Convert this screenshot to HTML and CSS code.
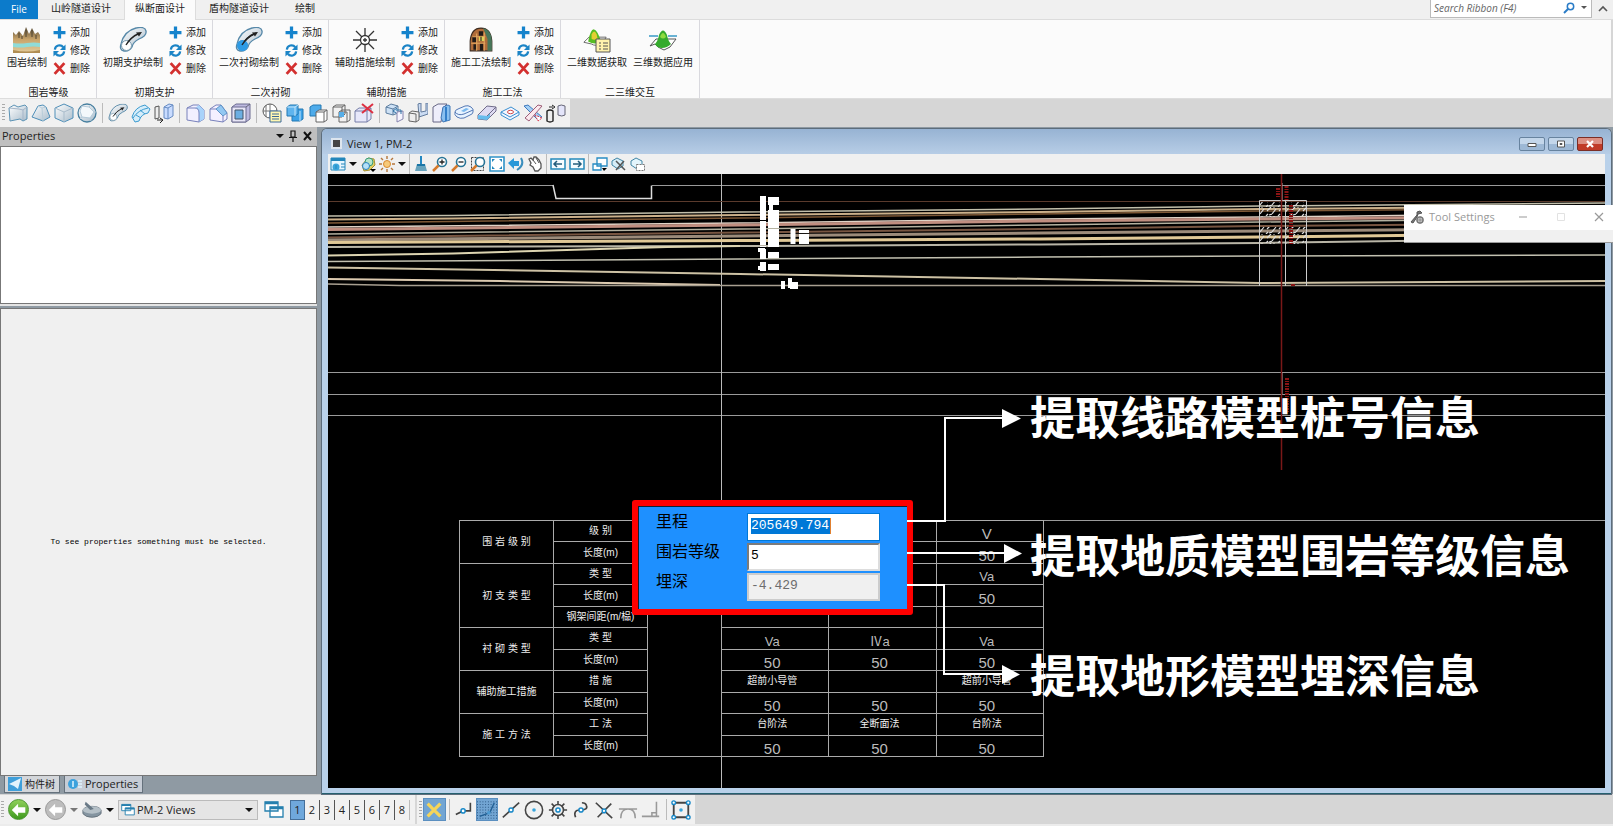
FILE: index.html
```html
<!DOCTYPE html>
<html lang="zh-CN">
<head>
<meta charset="utf-8">
<title>View 1, PM-2</title>
<link rel="stylesheet" href="styles.css">
</head>
<body>
<svg class="defs" aria-hidden="true">
  <defs>
    <linearGradient id="gSteel" x1="0" y1="0" x2="1" y2="1"><stop offset="0" stop-color="#fff"/><stop offset="1" stop-color="#a9bccb"/></linearGradient>
    <linearGradient id="gRock" x1="0" y1="0" x2="0" y2="1"><stop offset="0" stop-color="#5c4f3a"/><stop offset="0.5" stop-color="#c9a46a"/><stop offset="1" stop-color="#e0c896"/></linearGradient>
    <symbol id="plus" viewBox="0 0 12 12"><path d="M6 0.500v11M0.500 6h11" stroke="#1583cc" stroke-width="3"/></symbol>
    <symbol id="sync" viewBox="0 0 14 14"><path d="M2 6a5 5 0 0 1 9-2.500M12 8a5 5 0 0 1-9 2.500" fill="none" stroke="#1b84c6" stroke-width="2.400"/><path d="M13.500 0.500v6h-6zM.5 13.500v-6h6z" fill="#1b84c6"/></symbol>
    <symbol id="cross" viewBox="0 0 12 12"><path d="M1.500 1l9 10M10.500 1l-9 10" stroke="#d3302f" stroke-width="2.600"/></symbol>
    <symbol id="rock" viewBox="0 0 28 26"><path d="M0 25V5l3 3 3-4 4 5 3-9 3 7 3-6 3 6 3-2 2 3v17z" fill="url(#gRock)"/><path d="M6 6v5M13 3v7M19 3v7M9 9v3M23 8v4" stroke="#4d4230"/><path d="M0 16q7 1 14 0t13 0v4q-7-1-13 0t-14 0z" fill="#8fdcd8"/><path d="M0 23q14 3 27 0v3H0z" fill="#b08d52"/></symbol>
    <symbol id="tube" viewBox="0 0 28 26"><path d="M2 17Q5 4 17 1q9-2 10 3t-7 8q-6 3-7 8-3 5-8 4t-3-7z" fill="url(#gSteel)" stroke="#5688a8" stroke-width="1.300"/><circle cx="7.500" cy="18.500" r="5" fill="#fff" stroke="#7899ad"/><path d="M7 18q5-8 12-11" fill="none" stroke="#222" stroke-width="1.400"/><path d="M23 5l-6 0.500 3 4z" fill="#222"/></symbol>
    <symbol id="tubeb" viewBox="0 0 28 26"><use href="#tube"/><circle cx="7.500" cy="18.500" r="5.500" fill="#2e9be5"/><path d="M7 18q5-8 12-11" fill="none" stroke="#222" stroke-width="1.400"/></symbol>
    <symbol id="bolts" viewBox="0 0 24 24"><circle cx="12" cy="12" r="4.500" fill="#fff" stroke="#333" stroke-width="1.300"/><path d="M12 0v8M12 16v8M0 12h8M16 12h8M3 3l6 6M15 15l6 6M21 3l-6 6M9 15l-6 6M12 10v4M10 12h4" stroke="#333" stroke-width="1.300"/></symbol>
    <symbol id="tunnel" viewBox="0 0 22 24"><path d="M1 22v-9Q2 1 11 1t10 12v9z" fill="#b06c3a" stroke="#3c2b20"/><path d="M13 1q8 2 8 12v9h-4V11z" fill="#47765a"/><path d="M3 9h4v5H3zM9 4h4v4H9zM4 16h3v5H4zM10 15h3v7h-3z" fill="#221b18"/><path d="M7 6v16M14 5v17M2 15h13M3 9h12" stroke="#e3a65f"/><path d="M9 9h5v4H9z" fill="#ded25a"/><path d="M11 9v4" stroke="#222"/></symbol>
    <symbol id="hill" viewBox="0 0 28 24"><path d="M1 17l6-6h20l-5 8q-8 3-12 0z" fill="#fff" stroke="#555"/><path d="M6 16Q9 1 13 2t8 14q-7 5-15 0z" fill="#56bd23"/><path d="M10 8q3-7 6 0l1 5q-4 2-7 0z" fill="#e4cf32"/></symbol>
    <symbol id="hilltag" viewBox="0 0 28 26"><use href="#hill" width="24" height="22"/><path d="M13 12h14v13H13z" fill="#fff3ad" stroke="#555"/><path d="M16 16h2m2 0h5M16 19h2m2 0h5M16 22h2m2 0h5" stroke="#555"/></symbol>
    <symbol id="hillline" viewBox="0 0 28 24"><path d="M1 18l6-7h20l-6 8-6 3-6-3-3-3z" fill="#fff" stroke="#555"/><path d="M6 16q3-3 4-9 4-9 8 0 1 6 4 9-4 4-9 4t-7-4z" fill="#35ab2d"/><path d="M11 9q3-8 6 0-3 3-6 0z" fill="#8edb3f"/><path d="M0 8h9M19 8h9" stroke="#3a9ac6" stroke-width="1.500"/></symbol>

    <symbol id="s1" viewBox="0 0 20 20"><path d="M1 5l5-3 4 2 7-2 2 2v12l-4 2-3-2-10 2z" fill="url(#gSteel)" stroke="#5c93b5"/><path d="M1 5l10 1 4 1v10M15 7l4-3" fill="none" stroke="#a5b5c8"/></symbol>
    <symbol id="s2" viewBox="0 0 20 20"><path d="M7 3l5-1 3 2 4 10-7 4-11-4z" fill="url(#gSteel)" stroke="#4f8fb8"/><path d="M7 3l4 2 4-1M11 5l1 13" fill="none" stroke="#b9cdd9"/></symbol>
    <symbol id="s3" viewBox="0 0 20 20"><path d="M1 5l9-4 9 4v10l-9 4-9-4z" fill="url(#gSteel)" stroke="#4f8fb8"/><path d="M1 5l9 4 9-4M10 9v10" fill="none" stroke="#a9bccb"/></symbol>
    <symbol id="s4" viewBox="0 0 20 20"><circle cx="10" cy="10" r="9" fill="url(#gSteel)" stroke="#477f9f" stroke-width="1.300"/><path d="M5 3l7 1 5 5-4 6-8-1-2-6z" fill="#f3f8fb" stroke="#b4cad9"/><path d="M12 4l2-2M17 9h2M13 15l1 3M5 14l-2 2" stroke="#b4cad9"/></symbol>
    <symbol id="s5" viewBox="0 0 28 26"><use href="#tube"/></symbol>
    <symbol id="s6" viewBox="0 0 20 20"><path d="M1 14Q4 4 14 2l5 4-2 4Q10 11 8 18l-4 1z" fill="#d5edfa" stroke="#3c9bd0"/><path d="M2 15Q7 7 17 5M5 12l5 3M9 7l5 4" fill="none" stroke="#3c9bd0"/></symbol>
    <symbol id="s7" viewBox="0 0 20 20"><path d="M1 4l4-1v12l-4 1z" fill="#eee" stroke="#555"/><path d="M10 4l5-3 4 1v11l-5 3-4-1z" fill="#c9dcff" stroke="#668bc2"/><path d="M10 4l4 1 5-3M14 5v11" stroke="#668bc2" fill="none"/><path d="M3 17h5m-2-2l3 2-3 3" stroke="#222" fill="none"/></symbol>
    <symbol id="s8" viewBox="0 0 20 20"><path d="M2 5l6-3h6l5 5v9l-5 3-12-2z" fill="#f2f0ff" stroke="#7881bb"/><path d="M10 5l4-3 5 5v9l-5 3V10q0-4-4-5z" fill="#a9d3fa"/><path d="M2 5h8q4 0 4 5v9" fill="none" stroke="#7881bb"/></symbol>
    <symbol id="s9" viewBox="0 0 20 20"><path d="M2 6l6-4h5l6 8v6l-4 3-13-2z" fill="#f4f0ff" stroke="#7881bb"/><path d="M8 6l5-4 6 8-4 3z" fill="#92c8f2" stroke="#5f94c8"/><path d="M15 13v6M2 6h6" stroke="#7881bb"/></symbol>
    <symbol id="s10" viewBox="0 0 20 20"><path d="M1 4l4-3h14v15l-4 3H1z" fill="#bdb9df" stroke="#6d6d91"/><path d="M1 4h14v15H1z" fill="#e7e5f6" stroke="#6d6d91"/><path d="M4 7h8v9H4z" fill="#6caee2" stroke="#456"/><path d="M15 4l4-3" stroke="#667"/></symbol>
    <symbol id="s11" viewBox="0 0 20 20"><circle cx="8" cy="8" r="7" fill="#fff" stroke="#555"/><path d="M1 8h14M8 1v14M4 2v12" stroke="#777"/><path d="M8 8h11v11H8z" fill="#fff7b2" stroke="#3c6a98"/><path d="M10 11h7M10 13.500h7M10 16h7" stroke="#3c6a98"/></symbol>
    <symbol id="s12" viewBox="0 0 20 20"><path d="M7 8l3-2h8v10l-3 2H7z" fill="#3da2e8" stroke="#2278b3"/><path d="M2 4l3-2h8v9l-3 2H2z" fill="#5fb4ee" stroke="#2278b3"/><path d="M2 4h8v9M10 4l3-2M15 8v10" fill="none" stroke="#c5e6fb"/></symbol>
    <symbol id="s13" viewBox="0 0 20 20"><path d="M2 4l3-2h8v9l-3 2H2z" fill="#4eabea" stroke="#2278b3"/><path d="M8 9l3-2h8v10l-3 2H8zM8 9h8v10M16 9l3-2" fill="#fff" stroke="#666"/></symbol>
    <symbol id="s14" viewBox="0 0 20 20"><path d="M2 4l3-2h9v9l-3 3H2zM2 4h9v10M11 4l3-2M8 9l3-2h8v10l-3 2H8zM8 9h8v10" fill="none" stroke="#666"/><path d="M8 9h5v5H8z" fill="#56aee8"/></symbol>
    <symbol id="s15" viewBox="0 0 20 20"><path d="M1 8l4-3h12v11l-4 3H1zM1 8h12v11M13 8l4-3" fill="#e7e8fa" stroke="#777fa8"/><path d="M8 1l11 9M19 1L8 10" stroke="#dd3042" stroke-width="2"/></symbol>
    <symbol id="s16" viewBox="0 0 20 20"><path d="M1 4l5-3 7 2v7l-5 2-7-2zM1 4l7 2v6M8 6l5-3" fill="#cde1f5" stroke="#5c7d9f"/><path d="M12 9l6-1v8l-6 3z" fill="#f6f4ff" stroke="#8584ad"/><path d="M11 7h5v4M12 5l-4 3 3 2" stroke="#2d72a5" fill="none"/></symbol>
    <symbol id="s17" viewBox="0 0 20 20"><path d="M10 1l3-1v9l5-1V0h2v11l-9 3z" fill="#cbdcf3" stroke="#627b9d"/><path d="M1 10l3-2 7 1v8l-3 2-7-1zM1 10l7 1v8" fill="#eee" stroke="#666"/></symbol>
    <symbol id="s18" viewBox="0 0 20 20"><path d="M2 4l5-3h9l-4 4-2 14H2z" fill="#eeeefb" stroke="#676785"/><path d="M12 4l5-2 2 1v14l-7 2-2-4z" fill="#8ac0ef" stroke="#3f78b8"/><path d="M15 4v14" stroke="#337fca" stroke-width="2"/></symbol>
    <symbol id="s19" viewBox="0 0 20 20"><path d="M1 9q0-2 3-3l7-3q3-1 6 1t2 5q0 2-3 3l-6 3q-4 1-7-1T1 9z" fill="#e7f3ff" stroke="#5478b4"/><path d="M1 9q3 4 9 2l9-4" fill="none" stroke="#5478b4"/><path d="M7 8l5-3 3 1-5 3z" fill="#7bb9ee"/></symbol>
    <symbol id="s20" viewBox="0 0 20 20"><path d="M1 12l9-9 9 1v4l-9 9-9-1z" fill="#dedbf2" stroke="#6f6b89"/><path d="M1 12l9 1v4l-9-1zM10 13l3-3v4l-3 3z" fill="#67bced"/><path d="M10 13l9-9" stroke="#6f6b89"/></symbol>
    <symbol id="s21" viewBox="0 0 20 20"><path d="M1 9l10-5 8 5v3l-9 5-9-5z" fill="#f3f6ff" stroke="#3a8fd0"/><path d="M1 9l9 5 9-5" stroke="#3a8fd0" fill="none"/><ellipse cx="10.500" cy="9" rx="3" ry="1.700" fill="#fff" stroke="#d04a4a"/></symbol>
    <symbol id="s22" viewBox="0 0 20 20"><path d="M1 3l4-1 14 12-4 3z" fill="#a2cff5" stroke="#3e78bd"/><path d="M19 3l-4-1L2 15l4 3z" fill="#fbe9ee" stroke="#9d5d77"/><path d="M12 12l3 6 4-3z" fill="#fff" stroke="#d93a4e" stroke-dasharray="2 1"/></symbol>
    <symbol id="s23" viewBox="0 0 20 20"><path d="M1 8q3-2 6 0v10q-3 2-6 0z" fill="#eee" stroke="#222" stroke-width="1.400"/><path d="M12 3q3-2 7 0v9q-3 2-7 0z" fill="#e4e5fa" stroke="#667"/><path d="M3 4h4M6 2l3 2-3 2" stroke="#222" fill="none"/></symbol>

    <symbol id="v1" viewBox="0 0 16 16"><path d="M1 2h14v12H1z" fill="#e7f6ff" stroke="#2487bb"/><path d="M1 2h14v3H1z" fill="#2487bb"/><circle cx="6" cy="11" r="3.500" fill="#3ba5dc"/><path d="M6 9v4M11 8h4M11 11h4" stroke="#2487bb"/></symbol>
    <symbol id="v2" viewBox="0 0 16 16"><path d="M2 9l6-7 6 1 1 6-5 5-6 1z" fill="#e4ce61" stroke="#a69030"/><circle cx="9" cy="6" r="4" fill="#b9e5ca" stroke="#389b76"/><circle cx="6" cy="10" r="3.500" fill="#b5e1f8" stroke="#2781bf"/><path d="M10 13h6l-3 3z"/></symbol>
    <symbol id="v3" viewBox="0 0 16 16"><circle cx="8" cy="8" r="3.500" fill="#f7c979" stroke="#d78931"/><path d="M8 0v3M8 13v3M0 8h3M13 8h3M2 2l2 2M12 12l2 2M14 2l-2 2M4 12l-2 2" stroke="#b5763b" stroke-width="1.400"/></symbol>
    <symbol id="v4" viewBox="0 0 16 16"><path d="M8 0v9" stroke="#2387c1" stroke-width="2"/><path d="M4 8h8l2 7H2z" fill="#67a3bd"/><path d="M4 8h8v2H4z" fill="#1b75a5"/></symbol>
    <symbol id="mag" viewBox="0 0 16 16"><circle cx="10" cy="6" r="4.500" fill="#fff" stroke="#287496" stroke-width="1.600"/><path d="M6.500 9.500L1 15" stroke="#d5792b" stroke-width="2.500"/></symbol>
    <symbol id="v5" viewBox="0 0 16 16"><use href="#mag"/><path d="M10 3.500v5M7.500 6h5" stroke="#222" stroke-width="1.300"/></symbol>
    <symbol id="v6" viewBox="0 0 16 16"><use href="#mag"/><path d="M7.500 6h5" stroke="#222" stroke-width="1.300"/></symbol>
    <symbol id="v7" viewBox="0 0 16 16"><path d="M1.500 1.500h12v13h-12z" fill="none" stroke="#444" stroke-dasharray="2 1"/><use href="#mag"/></symbol>
    <symbol id="v8" viewBox="0 0 16 16"><path d="M1 1h14v14H1z" fill="#fff" stroke="#2f93c8" stroke-width="1.600"/><path d="M3 3h3L3 6zM13 3v3l-3-3zM3 13v-3l3 3zM13 13h-3l3-3z" fill="#2487bb"/></symbol>
    <symbol id="v9" viewBox="0 0 16 16"><path d="M0 7l6-5v3h5v5H6v3z" fill="#2998d8"/><path d="M13 2q4 7-4 12" stroke="#3b8ebd" stroke-width="2" fill="none"/></symbol>
    <symbol id="v10" viewBox="0 0 16 16"><path d="M2 3l2-1 2 2 1-3 2 0 3 3 2 4v4l-3 3H8L6 11 3 9l1-2z" fill="#fff" stroke="#555" stroke-width="1.300"/><path d="M6 4l3 4M9 2l3 5" stroke="#555"/></symbol>
    <symbol id="v11" viewBox="0 0 16 16"><path d="M1 3h14v10H1z" fill="#f6fcff" stroke="#2589bb" stroke-width="1.500"/><path d="M12 8H4m3-3L4 8l3 3" fill="none" stroke="#245d7c" stroke-width="1.500"/></symbol>
    <symbol id="v12" viewBox="0 0 16 16"><path d="M1 3h14v10H1z" fill="#f6fcff" stroke="#2589bb" stroke-width="1.500"/><path d="M4 8h8M9 5l3 3-3 3" fill="none" stroke="#245d7c" stroke-width="1.500"/></symbol>
    <symbol id="v13" viewBox="0 0 16 16"><path d="M5 2h10v8H5zM1 8h8v6H1z" fill="#fff" stroke="#268ac2" stroke-width="1.300"/><path d="M10 12h5l-3 3z"/></symbol>
    <symbol id="v14" viewBox="0 0 16 16"><path d="M1 5l5-3 6 3v5l-5 3-6-4z" fill="#d6edf7" stroke="#4085a5"/><path d="M5 5l9 9M13 5l-8 9" stroke="#555" stroke-width="1.500"/></symbol>
    <symbol id="v15" viewBox="0 0 16 16"><path d="M1 5l5-3 6 3v5l-5 3-6-4z" fill="#e3f5fc" stroke="#4085a5"/><path d="M6.500 8.500h8v6h-8z" fill="#fff" stroke="#777" stroke-dasharray="2 1"/></symbol>

    <symbol id="windows" viewBox="0 0 20 20"><path d="M1 2h13v9H1zM6 7h13v10H6z" fill="#fff" stroke="#2680ae" stroke-width="1.300"/><path d="M1 3h13M6 8h13" stroke="#2680ae" stroke-width="2.500"/></symbol>
    <symbol id="arrowL" viewBox="0 0 20 20"><path d="M9 3l-7 7 7 7v-4h8V7H9z" fill="#fff"/></symbol>
    <symbol id="disc" viewBox="0 0 22 20"><path d="M1 10q2-4 10-4t10 4v4q-3 4-10 4T1 14z" fill="#8494a0" stroke="#66727c"/><ellipse cx="11" cy="10" rx="10" ry="4" fill="#b5c0c7"/><path d="M4 1l9 8-4 1-6-6z" fill="#697986"/></symbol>
    <symbol id="b1" viewBox="0 0 22 22"><path d="M2 16L10 12h8V3" fill="none" stroke="#444" stroke-width="1.800"/><circle cx="10" cy="12" r="2.300" fill="#fff" stroke="#1788c8" stroke-width="1.600"/></symbol>
    <symbol id="b2" viewBox="0 0 22 22"><path d="M0 2h22M0 5h22M0 8h22M0 11h22M0 14h22M0 17h22M0 20h22" stroke="#234e79" stroke-dasharray="1 2"/><path d="M3 18l11-4 5-11" stroke="#215f94" stroke-width="1.500" fill="none"/><circle cx="13" cy="14" r="2" fill="#4c9bd2"/></symbol>
    <symbol id="b3" viewBox="0 0 22 22"><path d="M2 19L20 3" stroke="#444" stroke-width="1.800"/><circle cx="11" cy="11" r="2.300" fill="#fff" stroke="#1788c8" stroke-width="1.600"/></symbol>
    <symbol id="b4" viewBox="0 0 22 22"><circle cx="11" cy="11" r="9.500" fill="none" stroke="#444" stroke-width="1.700"/><circle cx="11" cy="11" r="2" fill="#37a5dc"/></symbol>
    <symbol id="b5" viewBox="0 0 22 22"><circle cx="11" cy="11" r="6" fill="none" stroke="#444" stroke-width="1.700"/><path d="M11 1v4M11 17v4M1 11h4M17 11h4M4 4l3 3M15 15l3 3M18 4l-3 3M7 15l-3 3" stroke="#444" stroke-width="1.700"/><circle cx="11" cy="11" r="2.300" fill="#fff" stroke="#1788c8" stroke-width="1.600"/></symbol>
    <symbol id="b6" viewBox="0 0 22 22"><path d="M5 19q-3-8 5-8 9 0 7-5-1-3-5-3" fill="none" stroke="#444" stroke-width="1.800"/><circle cx="11" cy="11" r="2.300" fill="#fff" stroke="#1788c8" stroke-width="1.600"/></symbol>
    <symbol id="b7" viewBox="0 0 22 22"><path d="M2 3l18 17M19 4L4 19" stroke="#444" stroke-width="1.800"/><circle cx="11" cy="12" r="2" fill="#fff" stroke="#1788c8" stroke-width="1.600"/></symbol>
    <symbol id="b8" viewBox="0 0 22 22"><path d="M1 10h20M3 20q0-10 8-10t8 10" fill="none" stroke="#999" stroke-width="1.700"/></symbol>
    <symbol id="b9" viewBox="0 0 22 22"><path d="M1 18h19M17 2v16M12 18v-4h5" fill="none" stroke="#999" stroke-width="1.700"/></symbol>
    <symbol id="b10" viewBox="0 0 22 22"><path d="M3 3h16v16H3z" fill="none" stroke="#444" stroke-width="2"/><g fill="#fff" stroke="#1788c8" stroke-width="1.500"><circle cx="3" cy="3" r="2"/><circle cx="19" cy="3" r="2"/><circle cx="3" cy="19" r="2"/><circle cx="19" cy="19" r="2"/></g><circle cx="11" cy="11" r="2" fill="#37a5dc"/></symbol>
    <pattern id="hatch" width="12" height="9" patternUnits="userSpaceOnUse"><path d="M0 7l4-5M7 4l4-4M6 9l2-2M1 0h2M9 8l3-1" stroke="#ddd" stroke-width="1.200"/></pattern>
  </defs>
</svg>

<nav class="tabs">
  <button class="tab file">File</button>
  <button class="tab">山岭隧道设计</button>
  <button class="tab active">纵断面设计</button>
  <button class="tab">盾构隧道设计</button>
  <button class="tab">绘制</button>
  <div class="search">
    <input type="text" placeholder="Search Ribbon (F4)" aria-label="Search Ribbon">
    <svg width="12" height="12" viewBox="0 0 12 12"><circle cx="7.500" cy="4.500" r="3.200" fill="none" stroke="#2a7cc7" stroke-width="1.500"/><path d="M5 7L1 11" stroke="#2a7cc7" stroke-width="2"/></svg>
    <i class="caret small"></i>
  </div>
  <button class="collapse" aria-label="Collapse ribbon"><svg width="10" height="8" viewBox="0 0 10 8"><path d="M1 6l4-4 4 4" fill="none" stroke="#555" stroke-width="1.600"/></svg></button>
</nav>

<section class="ribbon">
  <div class="group">
    <div class="tools">
      <button class="big"><svg width="28" height="26"><use href="#rock"/></svg>围岩绘制</button>
      <div class="stack"><button><svg><use href="#plus"/></svg>添加</button><button><svg><use href="#sync"/></svg>修改</button><button><svg><use href="#cross"/></svg>删除</button></div>
    </div>
    <div class="name">围岩等级</div>
  </div>
  <div class="group">
    <div class="tools">
      <button class="big"><svg width="28" height="26"><use href="#tube"/></svg>初期支护绘制</button>
      <div class="stack"><button><svg><use href="#plus"/></svg>添加</button><button><svg><use href="#sync"/></svg>修改</button><button><svg><use href="#cross"/></svg>删除</button></div>
    </div>
    <div class="name">初期支护</div>
  </div>
  <div class="group">
    <div class="tools">
      <button class="big"><svg width="28" height="26"><use href="#tubeb"/></svg>二次衬砌绘制</button>
      <div class="stack"><button><svg><use href="#plus"/></svg>添加</button><button><svg><use href="#sync"/></svg>修改</button><button><svg><use href="#cross"/></svg>删除</button></div>
    </div>
    <div class="name">二次衬砌</div>
  </div>
  <div class="group">
    <div class="tools">
      <button class="big"><svg width="24" height="26"><use href="#bolts"/></svg>辅助措施绘制</button>
      <div class="stack"><button><svg><use href="#plus"/></svg>添加</button><button><svg><use href="#sync"/></svg>修改</button><button><svg><use href="#cross"/></svg>删除</button></div>
    </div>
    <div class="name">辅助措施</div>
  </div>
  <div class="group">
    <div class="tools">
      <button class="big"><svg width="24" height="26"><use href="#tunnel"/></svg>施工工法绘制</button>
      <div class="stack"><button><svg><use href="#plus"/></svg>添加</button><button><svg><use href="#sync"/></svg>修改</button><button><svg><use href="#cross"/></svg>删除</button></div>
    </div>
    <div class="name">施工工法</div>
  </div>
  <div class="group">
    <div class="tools">
      <button class="big"><svg width="28" height="26"><use href="#hilltag"/></svg>二维数据获取</button>
      <button class="big"><svg width="28" height="26"><use href="#hillline"/></svg>三维数据应用</button>
    </div>
    <div class="name">二三维交互</div>
  </div>
</section>

<div class="toolrow">
  <div class="toolbar solids">
    <i class="grip"></i>
    <button aria-label="Slab"><svg><use href="#s1"/></svg></button><button aria-label="Cone"><svg><use href="#s2"/></svg></button><button aria-label="Cube"><svg><use href="#s3"/></svg></button><button aria-label="Sphere"><svg><use href="#s4"/></svg></button>
    <i class="sep"></i>
    <button aria-label="Sweep"><svg><use href="#s5"/></svg></button><button aria-label="Curve sweep"><svg><use href="#s6"/></svg></button><button aria-label="Extrude"><svg><use href="#s7"/></svg></button>
    <i class="sep"></i>
    <button aria-label="Fillet"><svg><use href="#s8"/></svg></button><button aria-label="Chamfer"><svg><use href="#s9"/></svg></button><button aria-label="Shell"><svg><use href="#s10"/></svg></button>
    <i class="sep"></i>
    <button aria-label="Properties"><svg><use href="#s11"/></svg></button><button aria-label="Unite"><svg><use href="#s12"/></svg></button><button aria-label="Subtract"><svg><use href="#s13"/></svg></button><button aria-label="Intersect"><svg><use href="#s14"/></svg></button><button aria-label="Delete feature"><svg><use href="#s15"/></svg></button>
    <i class="sep"></i>
    <button aria-label="Modify face"><svg><use href="#s16"/></svg></button><button aria-label="Cut"><svg><use href="#s17"/></svg></button><button aria-label="Taper"><svg><use href="#s18"/></svg></button><button aria-label="Offset"><svg><use href="#s19"/></svg></button><button aria-label="Slice"><svg><use href="#s20"/></svg></button><button aria-label="Imprint"><svg><use href="#s21"/></svg></button><button aria-label="Trim"><svg><use href="#s22"/></svg></button><button aria-label="Convert"><svg><use href="#s23"/></svg></button>
  </div>
</div>

<main class="work">
  <aside class="dock">
    <header class="dockhead"><span>Properties</span>
      <svg width="38" height="12" viewBox="0 0 38 12"><path d="M1 4h8L5 8z" fill="#111"/><path d="M16 1h4v6h-4zM14 7.500h8M18 7v5" fill="none" stroke="#111" stroke-width="1.200"/><path d="M29 2l7 8M36 2l-7 8" stroke="#111" stroke-width="2"/></svg>
    </header>
    <div class="pane white"></div>
    <div class="pane grey">To see properties something must be selected.</div>
    <div class="docktabs">
      <button><svg width="14" height="14" viewBox="0 0 14 14"><path d="M0 0h14v14H0z" fill="#3f9fda"/><path d="M1 7l12-6-3 11-4-3z" fill="#e2f3fc"/></svg>构件树</button>
      <button class="on"><svg width="14" height="12" viewBox="0 0 14 12"><circle cx="5" cy="6" r="5" fill="#3da2dd"/><path d="M5 3v6M10 3h4M10 6h4M10 9h4" stroke="#dff3ff" stroke-width="1.500"/></svg>Properties</button>
    </div>
  </aside>

  <section class="view">
    <header class="titlebar"><i class="winicon"></i><span>View 1, PM-2</span>
      <button aria-label="Minimize"><svg width="10" height="8" viewBox="0 0 10 8"><path d="M1 3.500h8v3H1z" fill="#fff" stroke="#555"/></svg></button>
      <button aria-label="Restore"><svg width="10" height="8" viewBox="0 0 10 8"><path d="M1.500 1h7v6h-7z" fill="#fff" stroke="#555"/><path d="M4 3.500h2v1H4z" fill="#fff" stroke="#555"/></svg></button>
      <button class="close" aria-label="Close"><svg width="10" height="8" viewBox="0 0 10 8"><path d="M2 1l6 6M8 1L2 7" stroke="#fff" stroke-width="2.200"/></svg></button>
    </header>
    <div class="viewbar">
      <button aria-label="View attributes"><svg><use href="#v1"/></svg></button><i class="caret"></i>
      <button aria-label="Display style"><svg><use href="#v2"/></svg></button><button aria-label="Brightness"><svg><use href="#v3"/></svg></button><i class="caret"></i>
      <i class="sep"></i>
      <button aria-label="Update"><svg><use href="#v4"/></svg></button><button aria-label="Zoom in"><svg><use href="#v5"/></svg></button><button aria-label="Zoom out"><svg><use href="#v6"/></svg></button><button aria-label="Window area"><svg><use href="#v7"/></svg></button><button aria-label="Fit view"><svg><use href="#v8"/></svg></button><button aria-label="Rotate"><svg><use href="#v9"/></svg></button><button aria-label="Pan"><svg><use href="#v10"/></svg></button>
      <i class="sep"></i>
      <button aria-label="Previous"><svg><use href="#v11"/></svg></button><button aria-label="Next"><svg><use href="#v12"/></svg></button>
      <i class="sep"></i>
      <button aria-label="Copy view"><svg><use href="#v13"/></svg></button><button aria-label="Clip"><svg><use href="#v14"/></svg></button><button aria-label="Clip mask"><svg><use href="#v15"/></svg></button>
    </div>
    <div class="canvas">
      <svg class="drawing" aria-hidden="true"><g transform="translate(-328 -174)" fill="none">
        <g stroke="#9a9a9a"><path d="M328 185.500H553M652 185.500H3000M328 372.500H3000M328 394.500H3000M328 415.500H3000M1043 520.500H3000"/><path d="M721.500 174V900" stroke="#bbb"/></g>
        <path d="M553 185l3 13.500h95.500v-13" stroke="#ddd" stroke-width="1.500"/>
        <path d="M328 201.500H3000" stroke="#5a3a2c"/>
        <g stroke-width="1.500">
          <path d="M328 216L453 215.500 740 212 1040 209 1260 206 1605 203" stroke="#c2bfab"/>
          <path d="M328 219.500L453 218.500 740 215 1040 212 1260 209 1605 206" stroke="#cbb08a" stroke-width="2"/>
          <path d="M328 223L740 218 1040 214 1260 211 1605 208" stroke="#7d5836"/>
          <path d="M328 227L740 223 1040 219 1260 217 1605 213" stroke="#e0d3c6"/>
          <path d="M328 229.500L740 225 1040 221 1260 219 1605 216" stroke="#c08e80" stroke-width="3"/>
          <path d="M328 234L740 229 1040 225 1260 222 1605 218" stroke="#b4b1a0"/>
          <path d="M328 237.500L740 232.500 1040 229 1260 226 1605 223" stroke="#785541" stroke-width="2"/>
          <path d="M328 240L740 236 1040 233 1260 231 1605 228" stroke="#9c8b7a" stroke-width="3"/>
          <path d="M328 242.500L740 240.500 1040 239 1260 237 1605 233" stroke="#e0c896" stroke-width="3"/>
          <path d="M328 247L740 246 1040 244.500 1260 243 1605 238" stroke="#b9b5a6" stroke-width="2"/>
          <path d="M328 255.500L453 253.500 667 247 740 246" stroke="#ddd4b0" stroke-width="2"/>
          <path d="M328 261.500L740 259 1040 257 1260 256 1605 255" stroke="#c2c0b0"/>
          <path d="M328 267.500L740 274 1040 279 1260 283 1605 281" stroke="#cdc1a4" stroke-width="2"/>
          <path d="M328 279L500 281 720 285" stroke="#dccab0" stroke-width="2"/>
          <path d="M328 284L400 285.500H3000" stroke="#a89f90"/>
        </g>
        <g stroke="#fff">
          <path d="M763 196V247M763 249V259M763 262V271" stroke-width="6" stroke-dasharray="24 1"/>
          <path d="M773.500 197V205M773.500 210V247M773.500 252V258M773.500 264V270" stroke-width="11" stroke-dasharray="18 1"/>
          <path d="M771 204V211M758 250h5v5M758 268h5" stroke-width="4"/>
          <path d="M793 229V244" stroke-width="5"/><path d="M804 230V244" stroke-width="10" stroke-dasharray="3 1 12"/>
          <path d="M783 281V289M790 278V288" stroke-width="4"/><path d="M794 282V289" stroke-width="8"/>
        </g>
        <path d="M1260 202h21v15h-21zM1286 202h20v15h-20zM1260 227h21v17h-21zM1286 227h20v17h-20z" fill="url(#hatch)"/>
        <path d="M1259.500 286V200.500H1306.500V286M1281.500 200V286M1285.500 200V286M1282 183V200M1282 372V394" stroke="#ccc"/>
        <path d="M1281.500 174V470" stroke="#7a1818" stroke-width="1.500"/>
        <path d="M1278 188V198M1286.500 186V201M1291 205V245M1293 284V287M1287 378V412" stroke="#8a1414" stroke-width="4" stroke-dasharray="2 1 1 1"/>
      </g></svg>

      <table class="sheet">
        <colgroup><col class="c1"><col class="c1"><col class="c2"><col class="c3"><col class="c3"><col class="c3"></colgroup>
        <tr><th rowspan="2">围 岩 级 别</th><td>级 别</td><td rowspan="11"></td><td></td><td></td><td class="n">V</td></tr>
        <tr><td>长度(m)</td><td></td><td></td><td class="n">50</td></tr>
        <tr><th rowspan="3">初 支 类 型</th><td>类 型</td><td></td><td></td><td class="n a">Va</td></tr>
        <tr><td>长度(m)</td><td></td><td></td><td class="n">50</td></tr>
        <tr><td>钢架间距(m/榀)</td><td></td><td></td><td></td></tr>
        <tr><th rowspan="2">衬 砌 类 型</th><td>类 型</td><td class="n a">Va</td><td class="n a">Ⅳa</td><td class="n a">Va</td></tr>
        <tr><td>长度(m)</td><td class="n">50</td><td class="n">50</td><td class="n">50</td></tr>
        <tr><th rowspan="2">辅助施工措施</th><td>措 施</td><td class="m">超前小导管</td><td></td><td class="m">超前小导管</td></tr>
        <tr><td>长度(m)</td><td class="n">50</td><td class="n">50</td><td class="n">50</td></tr>
        <tr><th rowspan="2">施 工 方 法</th><td>工 法</td><td class="m">台阶法</td><td class="m">全断面法</td><td class="m">台阶法</td></tr>
        <tr><td>长度(m)</td><td class="n">50</td><td class="n">50</td><td class="n">50</td></tr>
      </table>

      <form class="probe">
        <label for="km">里程</label><input id="km" class="picked" type="text" value="205649.794">
        <label for="lv">围岩等级</label><input id="lv" type="text" value="5">
        <label for="dp">埋深</label><input id="dp" type="text" value="-4.429" disabled>
      </form>

      <svg class="drawing" aria-hidden="true"><g transform="translate(-328 -174)">
        <path d="M907 521H945V418H1003M907 553H1005M907 585H944V674H1003" fill="none" stroke="#fff" stroke-width="2"/>
        <path d="M1002 409v19l19-9.500zM1004 544v19l18-9.500zM1002 665v19l18-9.500z" fill="#fff"/>
      </g></svg>
      <p class="note n1">提取线路模型桩号信息</p>
      <p class="note n2">提取地质模型围岩等级信息</p>
      <p class="note n3">提取地形模型埋深信息</p>
    </div>
  </section>
</main>

<section class="toolsettings">
  <header><svg width="14" height="14" viewBox="0 0 14 14"><path d="M1 12l6-7V2l3-1 2 2-4 1-1 3-4 6z" fill="#777" stroke="#555"/><circle cx="10" cy="10" r="3" fill="#ddd" stroke="#777" stroke-width="1.500"/><path d="M10 6v8M6 10h8" stroke="#888"/></svg><span>Tool Settings</span>
    <svg class="ctl" width="86" height="12" viewBox="0 0 86 12"><path d="M1 6h8" stroke="#999"/><path d="M39.500 2.500h7v7h-7z" fill="none" stroke="#e2e2e2"/><path d="M77 2l8 8M85 2l-8 8" stroke="#999" stroke-width="1.200"/></svg>
  </header>
</section>

<footer class="bottom">
  <div class="toolbar nav">
    <i class="grip"></i>
    <button class="round go" aria-label="Back"><svg><use href="#arrowL"/></svg></button><i class="caret"></i>
    <button class="round fwd" aria-label="Forward"><svg><use href="#arrowL"/></svg></button><i class="caret dim"></i>
    <button class="book" aria-label="Models"><svg><use href="#disc"/></svg></button><i class="caret"></i>
    <div class="combo"><svg width="14" height="14"><use href="#windows"/></svg>
      <select aria-label="View group"><option>PM-2 Views</option></select><i class="caret"></i></div>
    <button class="book wins" aria-label="View groups"><svg><use href="#windows"/></svg></button>
    <div class="nums"><button class="on">1</button><button>2</button><button>3</button><button>4</button><button>5</button><button>6</button><button>7</button><button>8</button></div>
  </div>
  <div class="toolbar snaps">
    <i class="grip"></i>
    <button class="on" aria-label="AccuSnap"><svg viewBox="0 0 22 22"><path d="M4 4l14 14M18 4L4 18" stroke="#f5d55a" stroke-width="3.500"/></svg></button>
    <i class="sep"></i>
    <button aria-label="Nearest"><svg><use href="#b1"/></svg></button><button class="on" aria-label="Keypoint"><svg><use href="#b2"/></svg></button><button aria-label="Midpoint"><svg><use href="#b3"/></svg></button><button aria-label="Center"><svg><use href="#b4"/></svg></button><button aria-label="Origin"><svg><use href="#b5"/></svg></button><button aria-label="Bisector"><svg><use href="#b6"/></svg></button><button aria-label="Intersection"><svg><use href="#b7"/></svg></button><button aria-label="Tangent"><svg><use href="#b8"/></svg></button><button aria-label="Perpendicular"><svg><use href="#b9"/></svg></button>
    <i class="sep"></i>
    <button aria-label="Multi-snap"><svg><use href="#b10"/></svg></button>
  </div>
</footer>
</body>
</html>
```

FILE: styles.css
```css
* { box-sizing: border-box; }
body {
  margin: 0;
  min-height: 100vh;
  display: flex;
  flex-direction: column;
  background: #d6d6d6;
  color: #222;
  font: 11px/14px "Open Sans", "Noto Sans CJK SC", sans-serif;
  position: relative;
  overflow: hidden;
}
button {
  font: inherit;
  color: inherit;
  padding: 0;
  border: 0;
  background: none;
  display: flex;
  align-items: center;
  justify-content: center;
  white-space: nowrap;
}
svg { display: block; flex: none; }
.defs { position: absolute; width: 0; height: 0; }

.caret { border: 4px solid transparent; border-top-color: #111; border-bottom: 0; flex: none; }
.caret.small { border-width: 3px; border-bottom: 0; border-top-color: #555; }
.caret.dim { border-top-color: #777; }
.sep { width: 1px; align-self: stretch; background: #bbb; flex: none; }
.grip { width: 3px; height: 18px; flex: none; background: repeating-linear-gradient(#aaa 0 1px, transparent 1px 3px); }

/* Ribbon tabs */
.tabs {
  display: flex;
  height: 20px;
  background: #f0f0f0;
  font-size: 10px;
  align-items: stretch;
  box-shadow: inset 0 -1px #dcdcdc;
}
.tab { padding: 0 13px 4px; }
.tab.file { width: 38px; height: 19px; background: #0c7bcb; color: #fff; padding: 0 0 2px; }
.tab.active { background: #fbfbfb; padding: 0 10px 4px; border: 1px solid #dcdcdc; border-width: 0 1px; }
.search {
  margin-left: auto;
  width: 162px;
  height: 18px;
  display: flex;
  align-items: center;
  gap: 6px;
  padding: 0 4px 2px 3px;
  background: #fff;
  border: 1px solid #bbb;
  border-top: 0;
}
.search input {
  flex: 1;
  min-width: 0;
  border: 0;
  padding: 0;
  outline: 0;
  background: none;
  font: italic 10px/14px "Open Sans", sans-serif;
}
.search input::placeholder { color: #666; }
.collapse { width: 21px; padding-bottom: 2px; }

/* Ribbon */
.ribbon { display: flex; height: 79px; background: #fbfbfb; margin-right: 2px; border-bottom: 1px solid #ddd; font-size: 10px; }
.group {
  display: flex;
  flex-direction: column;
  justify-content: space-between;
  padding: 4px 6px 0;
  border-right: 1px solid #d9d9de;
}
.group:first-child { padding-left: 7px; }
.tools { display: flex; gap: 6px; }
.big { flex-direction: column; gap: 2px; justify-content: flex-start; padding-top: 3px; }
.stack { display: flex; flex-direction: column; gap: 4px; }
.stack button { gap: 4px; height: 14px; padding-top: 2px; }
.stack svg { width: 13px; height: 13px; }
.name { text-align: center; line-height: 12px; }

/* Solid modelling tools */
.toolrow { display: flex; height: 28px; }
.toolbar { display: flex; align-items: center; background: #f1f1f1; }
.solids { gap: 3px; padding: 0 4px 0 2px; }
.solids svg { width: 20px; height: 20px; }
.solids .sep { margin: 4px 2px; }

/* Workspace */
.work { flex: 1; display: flex; min-height: 0; background: #8f9aa3; gap: 5px; }
.dock { width: 317px; display: flex; flex-direction: column; }
.dockhead {
  height: 19px;
  display: flex;
  align-items: center;
  justify-content: space-between;
  background: #bfbfbf;
  padding: 0 4px 1px 2px;
}
.pane { border: 1px solid #777; }
.pane.white { flex: 157; background: #fff; margin-bottom: 4px; box-shadow: 0 2px #e4e4e4; }
.pane.grey {
  flex: 469;
  background: #f0f0f0;
  display: flex;
  align-items: center;
  justify-content: center;
  font: 8px/10px "Liberation Mono", monospace;
  color: #000;
}
.docktabs { display: flex; gap: 4px; height: 18px; padding: 0 4px 1px; }
.docktabs button { background: #d3d6da; gap: 3px; padding: 0 4px 0 3px; border: 1px solid #65717c; border-top: 0; }
.docktabs button:first-child { font-size: 10px; }
.docktabs .on { background: #c6ccd5; }

.view {
  flex: 1;
  min-width: 0;
  display: flex;
  flex-direction: column;
  margin: 2px 2px 0 0;
  padding: 0 6px 5px;
  background: #b9d1ea;
  border-radius: 5px 5px 0 0;
  border-bottom: 1px solid #25606f;
  box-shadow: 0 0 0 1px #5d6d7c;
}
.titlebar {
  height: 25px;
  margin: 0 -6px;
  padding: 0 14px 0 11px;
  display: flex;
  align-items: center;
  gap: 3px;
  border-radius: 5px 5px 0 0;
  background: linear-gradient(#97b3d3, #b7cde6);
}
.titlebar { padding-right: 8px; }
.titlebar span { margin: 5px auto 0 4px; }
.titlebar button { width: 26px; height: 14px; margin-top: 5px; border: 1px solid #67839f; border-radius: 2px; background: linear-gradient(#c3d6ea 50%, #9db8d5 50%); }
.titlebar .close { background: linear-gradient(#dc9084 50%, #c03b28 50%); border-color: #7b2e26; }
.winicon { width: 7px; height: 7px; background: #444; outline: 2px solid #dde5ee; margin-top: 4px; }
.viewbar { height: 20px; display: flex; align-items: center; gap: 3px; padding: 0 2px; background: #f0f0f0; }
.viewbar svg { width: 16px; height: 16px; }

.canvas { flex: 1; position: relative; background: #000; overflow: hidden; }
.drawing { position: absolute; inset: 0; width: 100%; height: 100%; }

.sheet {
  position: absolute;
  left: 131px;
  top: 346px;
  width: 585px;
  height: 237px;
  table-layout: fixed;
  border-collapse: collapse;
  color: #eee;
  font: 10px/12px "Liberation Sans", "Noto Sans CJK SC", sans-serif;
  text-align: center;
  white-space: nowrap;
}
.sheet th, .sheet td { height: 21px; border: 1px solid #aaa; padding: 0; font-weight: 400; overflow: hidden; }
.sheet .c1 { width: 94px; }
.sheet .c2 { width: 74px; }
.sheet .n { font-size: 15px; line-height: 14px; vertical-align: bottom; color: #bbb; padding-right: 6px; }
.sheet .a { font-size: 13px; }
.sheet .m { padding-right: 6px; }

.probe {
  position: absolute;
  left: 304px;
  top: 326px;
  width: 281px;
  display: grid;
  grid-template-columns: 91px 133px;
  gap: 2px 0;
  padding: 7px 0 8px 18px;
  border: 6px solid #f00;
  border-radius: 3px;
  background: #1e90ff;
  box-shadow: inset 1px 1px #123;
  color: #000;
}
.probe label { font: 16px/14px "Noto Sans CJK SC", sans-serif; }
.probe input {
  width: 133px;
  height: 28px;
  border: 2px solid #999;
  border-color: #7b7b7b #ddd #ddd #7b7b7b;
  padding: 0 2px 4px;
  background: #fff;
  color: #000;
  font: 13px/20px "Liberation Mono", monospace;
}
.probe .picked {
  border: 1px solid #0078d7;
  padding: 0 3px 4px;
  color: #fff;
  background: linear-gradient(90deg, #0078d7 79px, #e08030 79px) 3px 4px / 80px 16px no-repeat #fff;
}
.probe input:disabled { background: #f0f0f0; border-color: #ccc; color: #6d6d6d; }

.note { position: absolute; left: 702px; margin: 0; color: #fff; font: 700 45px/50px "Noto Sans CJK SC", sans-serif; white-space: nowrap; }
.n1 { top: 217px; }
.n2 { top: 355px; }
.n3 { top: 475px; }

.toolsettings { position: absolute; right: 0; top: 205px; width: 209px; height: 38px; background: #f0f0f0; border-bottom: 1px solid #999; }
.toolsettings header { display: flex; align-items: center; gap: 5px; height: 25px; padding: 0 9px 1px 6px; background: #fff; color: #999; }
.toolsettings .ctl { margin-left: auto; }

/* Bottom bar */
.bottom { display: flex; height: 32px; gap: 2px; padding-top: 1px; border-bottom: 2px solid #ececec; }
.nav { width: 415px; padding: 0 2px 0 1px; gap: 4px; }
.round { width: 21px; height: 21px; border-radius: 50%; }
.round svg { width: 18px; height: 18px; }
.go { background: linear-gradient(#8fd05a, #3f9a1e); border: 1px solid #4b9630; }
.fwd { background: #bdbdbd; border: 1px solid #999; }
.book svg { width: 20px; height: 20px; }
.combo { width: 140px; height: 20px; display: flex; align-items: center; gap: 2px; padding: 0 4px 0 2px; border: 1px solid #bbb; background: #e5e5e5; }
.combo select { flex: 1; min-width: 0; appearance: none; border: 0; padding: 0; background: none; font: inherit; color: inherit; }
.wins { padding: 0 2px; }
.nums { display: flex; }
.nums button { width: 15px; height: 20px; border-right: 1px solid #555; }
.nums button:last-child { border-right-color: #bbb; }
.nums .on { background: #6fa8dc; border: 1px solid #456f99; }
.snaps { width: 278px; padding: 0 3px 0 2px; gap: 1px; }
.snaps svg { width: 20px; height: 20px; }
.snaps button { width: 23px; height: 23px; flex: 0 1 auto; }
.snaps .on { background: #72a5d3; border: 1px solid #5b8fc0; }
.snaps .sep { margin: 4px 2px; }
```
